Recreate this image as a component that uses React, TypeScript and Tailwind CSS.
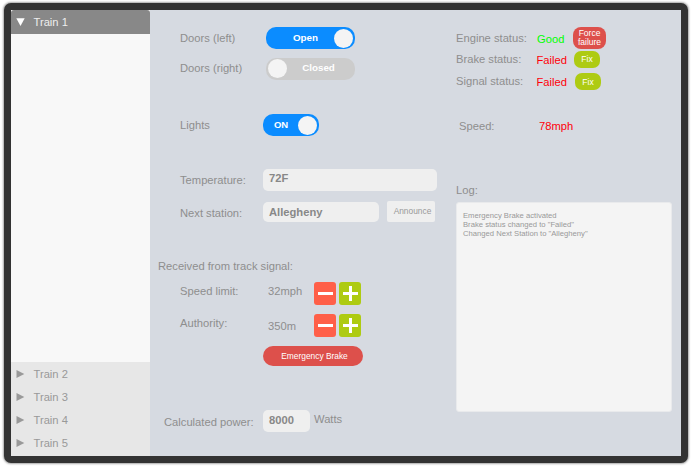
import type { ReactNode } from "react";

function Row({ className, children }: { className: string; children: ReactNode }) {
  return <div className={`flex items-start ${className}`}>{children}</div>;
}

function Label({ className, children }: { className: string; children: ReactNode }) {
  return <span className={`block shrink-0 whitespace-nowrap leading-[14px] ${className}`}>{children}</span>;
}

function Knob() {
  return <span className="size-[19px] shrink-0 rounded-full bg-[#f4f4f4]" />;
}

function Stepper() {
  return (
    <>
      <button className="flex h-[22.5px] w-[22px] items-center justify-center rounded-[3px] bg-[#ff5f48]" aria-label="decrease">
        <span className="h-[3px] w-[15px] bg-white" />
      </button>
      <button className="ml-[3px] flex h-[22.5px] w-[22px] items-center justify-center rounded-[3px] bg-[#aecb12]" aria-label="increase">
        <svg width="15" height="15" viewBox="0 0 15 15">
          <path d="M7.5 0V15M0 7.5H15" stroke="white" strokeWidth="3" />
        </svg>
      </button>
    </>
  );
}

const trains = ["Train 2", "Train 3", "Train 4", "Train 5"];
const logLines = [
  "Emergency Brake activated",
  'Brake status changed to "Failed"',
  'Changed Next Station to "Allegheny"',
];

function Sidebar() {
  return (
    <aside className="flex w-[139px] shrink-0 flex-col bg-[#f8f8f8]">
      <div className="flex h-6 items-center rounded-t-[3px] bg-[#888888] pl-[5px] text-[#eeeeee]">
        <svg width="9" height="8" viewBox="0 0 9 8">
          <path d="M0.3 0.3H8.7L4.5 8Z" fill="white" />
        </svg>
        <Label className="ml-[8.5px]">Train 1</Label>
      </div>
      <div className="h-[328px]" />
      <div className="flex-1 bg-[#e7e7e7] text-[#999999]">
        {trains.map((t) => (
          <div key={t} className="flex h-[23px] items-center pl-[5px] pt-px">
            <svg width="9" height="8" viewBox="0 0 9 8">
              <path d="M0.5 0L8.3 4L0.5 8Z" fill="#999999" />
            </svg>
            <Label className="ml-[8.5px]">{t}</Label>
          </div>
        ))}
      </div>
    </aside>
  );
}

function Controls() {
  return (
    <section className="w-[306px] shrink-0 pt-[17px]">
      <Row className="h-[30.5px] pl-[30px]">
        <Label className="mt-1 w-[86px]">Doors (left)</Label>
        <div className="flex h-[22px] w-[89px] items-center rounded-[10px] bg-[#0b8cff] pr-[2px] text-[9.8px] font-bold text-white">
          <span className="flex-1 pl-[11px] text-center">Open</span>
          <Knob />
        </div>
      </Row>
      <Row className="h-[56.5px] pl-[30px]">
        <Label className="mt-[3.5px] w-[86px]">Doors (right)</Label>
        <div className="flex h-[22px] w-[89px] items-center rounded-[10px] bg-[#cccccc] pl-[2px] text-[9.8px] font-bold text-white">
          <Knob />
          <span className="flex-1 pr-[5px] text-center">Closed</span>
        </div>
      </Row>
      <Row className="h-[55px] pl-[30px]">
        <Label className="mt-1 w-[83px]">Lights</Label>
        <div className="flex h-[22px] w-[56px] items-center rounded-[10px] bg-[#0b8cff] pr-[2px] text-[9.5px] font-bold text-white">
          <span className="flex-1 pl-px text-center">ON</span>
          <Knob />
        </div>
      </Row>
      <Row className="h-[33px] pl-[30px]">
        <Label className="mt-[4px] w-[83px]">Temperature:</Label>
        <div className="h-[22px] w-[174px] rounded-[5px] bg-[#efefef] pl-[6px] pt-[2px] font-bold leading-[14px] text-[#888888]">72F</div>
      </Row>
      <Row className="h-[57px] pl-[30px]">
        <Label className="mt-[4px] w-[83px]">Next station:</Label>
        <div className="h-5 w-[116px] rounded-[5px] bg-[#efefef] pl-[6px] pt-[3px] font-bold leading-[14px] text-[#888888]">Allegheny</div>
        <button className="-mt-px ml-2 h-[21px] w-[48px] rounded-[2px] bg-[#efefef] pl-[3px] text-[8.4px] text-[#999999]">Announce</button>
      </Row>
      <Row className="h-[23px] pl-[8px]">
        <Label className="">Received from track signal:</Label>
      </Row>
      <Row className="h-[32px] pl-[30px]">
        <Label className="mt-[2px] w-[88px]">Speed limit:</Label>
        <Label className="mt-[2px] w-[46px]">32mph</Label>
        <Stepper />
      </Row>
      <Row className="h-[32px] pl-[30px]">
        <Label className="mt-[2px] w-[88px]">Authority:</Label>
        <Label className="mt-[5px] w-[46px]">350m</Label>
        <Stepper />
      </Row>
      <Row className="h-[64px] pl-[113px]">
        <button className="h-5 w-[100px] rounded-full bg-[#dd504b] pl-[3px] text-[8.4px] text-white">Emergency Brake</button>
      </Row>
      <Row className="pl-[14px]">
        <Label className="mt-[5px] w-[99px]">Calculated power:</Label>
        <div className="h-[22px] w-[47px] rounded-[5px] bg-[#efefef] pl-[6px] pt-[3px] font-bold leading-[14px] text-[#888888]">8000</div>
        <Label className="ml-[4px] mt-[2px]">Watts</Label>
      </Row>
    </section>
  );
}

function Status() {
  return (
    <section className="flex-1 pt-[17px]">
      <Row className="h-[24px]">
        <Label className="mt-1 w-[81px]">Engine status:</Label>
        <Label className="mt-[5px] w-[36px] text-[#00ff00]">Good</Label>
        <button className="h-[22px] w-[33px] rounded-[8px] bg-[#dd504b] pb-px text-[8.5px] leading-[9px] text-white">Force failure</button>
      </Row>
      <Row className="h-[22px]">
        <Label className="mt-px w-[80.5px]">Brake status:</Label>
        <Label className="mt-[2px] w-[37.5px] text-[#ff0008]">Failed</Label>
        <button className="h-[17px] w-[26px] rounded-[7px] bg-[#aecb12] text-[8.5px] leading-[17px] text-white">Fix</button>
      </Row>
      <Row className="h-[46px]">
        <Label className="mt-px w-[80.5px]">Signal status:</Label>
        <Label className="mt-[2px] w-[38.5px] text-[#ff0008]">Failed</Label>
        <button className="h-[17px] w-[26px] rounded-[7px] bg-[#aecb12] text-[8.5px] leading-[16px] text-white">Fix</button>
      </Row>
      <Row className="h-[64px] pl-[3px]">
        <Label className="w-[80px]">Speed:</Label>
        <Label className="text-[#ff0008]">78mph</Label>
      </Row>
      <Row className="h-[18.5px]">
        <Label className="">Log:</Label>
      </Row>
      <div className="h-[210px] w-[215.5px] rounded-[3px] border border-[#e9eaec] bg-[#f4f4f4] pl-[6px] pt-[8px] text-[7.67px] leading-[9px] text-[#999999]">
        {logLines.map((l) => (
          <p key={l} className="whitespace-nowrap">{l}</p>
        ))}
      </div>
    </section>
  );
}

export default function App() {
  return (
    <div className="h-[466px] w-[691px] bg-white pl-1 pt-[3px] font-['Liberation_Sans',Arial,sans-serif] text-[11.2px] text-[#8e8e8e]">
      <div className="flex h-[460px] w-[684px] rounded-[7px] border-[7px] border-[#333333] bg-[#d6dae1] shadow-[0_0_2px_1px_rgba(0,0,0,0.35)]">
        <Sidebar />
        <Controls />
        <Status />
      </div>
    </div>
  );
}
